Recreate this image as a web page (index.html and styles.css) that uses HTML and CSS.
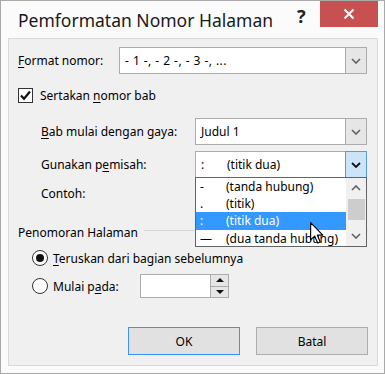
FILE: index.html
```html
<!DOCTYPE html>
<html lang="id">
<head>
    <meta charset="UTF-8">
    <title>Pemformatan Nomor Halaman</title>
    <link rel="stylesheet" href="styles.css">
</head>
<body>
    <div class="window">
        <div class="titlebar">
            <div class="title">Pemformatan Nomor Halaman</div>
            <div class="help">?</div>
            <div class="close">
                <svg width="12" height="12" viewBox="0 0 12 12"><path d="M1.5 1.5 L10.5 10.5 M10.5 1.5 L1.5 10.5" stroke="#fff" stroke-width="2"/></svg>
            </div>
        </div>

        <div class="client">
            <!-- Format nomor -->
            <div class="row row-format">
                <div class="label label-wide"><u>F</u>ormat nomor:</div>
                <div class="select select-format">
                    <div class="select-text format-text">- 1 -, - 2 -, - 3 -, ...</div>
                    <div class="select-btn">
                        <svg width="10" height="6" viewBox="0 0 10 6"><path d="M1 1 L5 5 L9 1" fill="none" stroke="#606060" stroke-width="1.6"/></svg>
                    </div>
                </div>
            </div>

            <!-- Sertakan nomor bab -->
            <div class="row row-check">
                <div class="checkbox">
                    <svg width="13" height="13" viewBox="0 0 13 13"><path d="M2 6.5 L5 9.8 L11 2.5" fill="none" stroke="#111" stroke-width="2.2"/></svg>
                </div>
                <div class="label">Sertakan <u>n</u>omor bab</div>
            </div>

            <!-- Bab mulai dengan gaya -->
            <div class="row row-bab">
                <div class="label label-indent"><u>B</u>ab mulai dengan gaya:</div>
                <div class="select select-small">
                    <div class="select-text">Judul 1</div>
                    <div class="select-btn">
                        <svg width="10" height="6" viewBox="0 0 10 6"><path d="M1 1 L5 5 L9 1" fill="none" stroke="#606060" stroke-width="1.6"/></svg>
                    </div>
                </div>
            </div>

            <!-- Gunakan pemisah -->
            <div class="row row-sep">
                <div class="label label-indent">Gunakan p<u>e</u>misah:</div>
                <div class="select select-small select-open">
                    <div class="select-text"><span class="sep-char">:</span>(titik dua)</div>
                    <div class="select-btn btn-active">
                        <svg width="10" height="6" viewBox="0 0 10 6"><path d="M1 1 L5 5 L9 1" fill="none" stroke="#111" stroke-width="1.8"/></svg>
                    </div>
                    <div class="dropdown">
                        <div class="options">
                            <div class="option"><span class="sep-char">-</span>(tanda hubung)</div>
                            <div class="option"><span class="sep-char">.</span>(titik)</div>
                            <div class="option selected"><span class="sep-char">:</span>(titik dua)</div>
                            <div class="option"><span class="sep-char">—</span>(dua tanda hubung)</div>
                        </div>
                        <div class="scrollbar">
                            <div class="scroll-arrow">
                                <svg width="10" height="6" viewBox="0 0 10 6"><path d="M1 5 L5 1 L9 5" fill="none" stroke="#606060" stroke-width="1.6"/></svg>
                            </div>
                            <div class="thumb"></div>
                            <div class="scroll-space"></div>
                            <div class="scroll-arrow">
                                <svg width="10" height="6" viewBox="0 0 10 6"><path d="M1 1 L5 5 L9 1" fill="none" stroke="#606060" stroke-width="1.6"/></svg>
                            </div>
                        </div>
                    </div>
                </div>
            </div>

            <!-- Contoh -->
            <div class="row row-sample">
                <div class="label label-indent">Contoh:</div>
            </div>

            <!-- Penomoran Halaman -->
            <div class="group-head">
                <span>Penomoran Halaman</span>
                <div class="group-line"></div>
            </div>

            <div class="row row-radio">
                <div class="radio"><div class="dot"></div></div>
                <div class="label"><u>T</u>eruskan dari bagian sebelumnya</div>
            </div>

            <div class="row row-radio2">
                <div class="radio"></div>
                <div class="label label-start">Mulai p<u>a</u>da:</div>
                <div class="spin">
                    <div class="spin-field"></div>
                    <div class="spin-btns">
                        <div class="spin-btn">
                            <svg width="8" height="4" viewBox="0 0 8 4"><path d="M0 4 L4 0 L8 4 Z" fill="#111"/></svg>
                        </div>
                        <div class="spin-btn">
                            <svg width="8" height="4" viewBox="0 0 8 4"><path d="M0 0 L8 0 L4 4 Z" fill="#111"/></svg>
                        </div>
                    </div>
                </div>
            </div>

            <div class="buttons">
                <div class="button button-default">OK</div>
                <div class="button">Batal</div>
            </div>
        </div>

        <svg class="cursor" width="14" height="22" viewBox="0 0 12 19">
            <path d="M0.5 0.5 L0.5 15.5 L4 12.2 L6.6 18.2 L8.8 17.2 L6.3 11.4 L11 11.4 Z" fill="#fff" stroke="#000" stroke-width="1" stroke-linejoin="round"/>
        </svg>
    </div>
</body>
</html>
```

FILE: styles.css
```css
body {
    margin: 0;
    font-family: "Noto Sans", "Open Sans", sans-serif;
    font-size: 12px;
    color: #000;
    background: #fff;
}

.window {
    position: relative;
    width: 385px;
    height: 374px;
    box-sizing: border-box;
    border: 1px solid #a9a9a9;
    background: #fbfbfb;
}

.titlebar {
    height: 37px;
    display: flex;
    align-items: flex-start;
}

.title {
    width: 279px;
    padding: 6px 0 0 17px;
    font-size: 17.5px;
    color: #1a1a1a;
    line-height: 26px;
    white-space: nowrap;
}

.help {
    width: 22px;
    padding-top: 5px;
    font-size: 18px;
    font-weight: bold;
    color: #222;
    line-height: 20px;
}

.close {
    width: 58px;
    height: 26px;
    margin-left: auto;
    margin-right: 6px;
    background: #c75050;
    display: flex;
    align-items: center;
    justify-content: center;
}

.client {
    width: 370px;
    height: 328px;
    margin-left: 7px;
    box-sizing: border-box;
    border: 1px solid #dadada;
    background: #f0f0f0;
    padding: 0 9px;
}

.row {
    display: flex;
    align-items: center;
}

.label {
    white-space: nowrap;
}

.label-wide {
    width: 101px;
}

.label-indent {
    width: 154px;
    padding-left: 23px;
}

u {
    text-decoration-thickness: 1px;
    text-underline-offset: 2px;
}

.row-format {
    margin-top: 8px;
}

.select {
    position: relative;
    height: 27px;
    box-sizing: border-box;
    border: 1px solid #acacac;
    background: #fff;
    display: flex;
}

.select-format {
    width: 248px;
}

.select-small {
    width: 172px;
}

.select-text {
    flex: 1;
    padding-left: 5px;
    line-height: 25px;
    white-space: nowrap;
}

.format-text {
    letter-spacing: 0.45px;
}

.select-btn {
    width: 20px;
    border-left: 1px solid #acacac;
    background: #e6e6e6;
    display: flex;
    align-items: center;
    justify-content: center;
}

.select-open .select-btn.btn-active {
    background: #cce4f7;
    border: 1px solid #569de5;
    margin: -1px -1px -1px 0;
}

.sep-char {
    display: inline-block;
    width: 26px;
}

.row-check {
    margin-top: 11px;
    height: 20px;
}

.checkbox {
    width: 13px;
    height: 13px;
    border: 1px solid #333;
    background: #fff;
    margin-right: 7px;
    display: flex;
    align-items: center;
    justify-content: center;
}

.row-bab {
    margin-top: 13px;
}

.row-sep {
    margin-top: 6px;
}

.dropdown {
    position: absolute;
    top: 25px;
    left: -1px;
    width: 172px;
    height: 70px;
    box-sizing: border-box;
    border: 1px solid #646464;
    background: #fff;
    display: flex;
    z-index: 2;
}

.options {
    flex: 1;
}

.option {
    height: 17px;
    line-height: 17px;
    padding-left: 4px;
    white-space: nowrap;
    overflow: hidden;
}

.option.selected {
    background: #3399ff;
    color: #fff;
    height: 17.5px;
}

.scrollbar {
    width: 20px;
    background: #f0f0f0;
    display: flex;
    flex-direction: column;
    align-items: center;
}

.scroll-arrow {
    height: 20px;
    display: flex;
    align-items: center;
    justify-content: center;
}

.thumb {
    width: 17px;
    height: 21px;
    margin-top: 1px;
    background: #cdcdcd;
}

.scroll-space {
    flex: 1;
}

.row-sample {
    margin-top: 6px;
    height: 18px;
}

.group-head {
    margin-top: 21px;
    height: 18px;
    display: flex;
    align-items: center;
}

.group-line {
    flex: 1;
    height: 1px;
    background: #d5d5d5;
    margin-left: 6px;
    margin-top: -3px;
}

.row-radio {
    margin-top: 8px;
    height: 18px;
    padding-left: 14px;
}

.radio {
    width: 14px;
    height: 14px;
    border: 1px solid #333;
    border-radius: 50%;
    background: #fff;
    margin-right: 5px;
    display: flex;
    align-items: center;
    justify-content: center;
}

.dot {
    width: 8px;
    height: 8px;
    border-radius: 50%;
    background: #111;
}

.row-radio2 {
    margin-top: 7px;
    height: 24px;
    padding-left: 14px;
}

.label-start {
    width: 87px;
}

.spin {
    width: 89px;
    height: 24px;
    box-sizing: border-box;
    border: 1px solid #acacac;
    background: #fff;
    display: flex;
}

.spin-field {
    flex: 1;
}

.spin-btns {
    width: 17px;
    display: flex;
    flex-direction: column;
    border-left: 1px solid #acacac;
}

.spin-btn {
    flex: 1;
    background: #e6e6e6;
    display: flex;
    align-items: center;
    justify-content: center;
}

.spin-btn + .spin-btn {
    border-top: 1px solid #acacac;
}

.buttons {
    margin-top: 29px;
    display: flex;
    justify-content: flex-end;
    gap: 16px;
}

.button {
    width: 112px;
    height: 28px;
    box-sizing: border-box;
    border: 1px solid #adadad;
    background: #e1e1e1;
    display: flex;
    align-items: center;
    justify-content: center;
}

.button-default {
    border-color: #3b95f0;
}

.cursor {
    position: absolute;
    left: 309px;
    top: 221px;
    z-index: 5;
}
```
